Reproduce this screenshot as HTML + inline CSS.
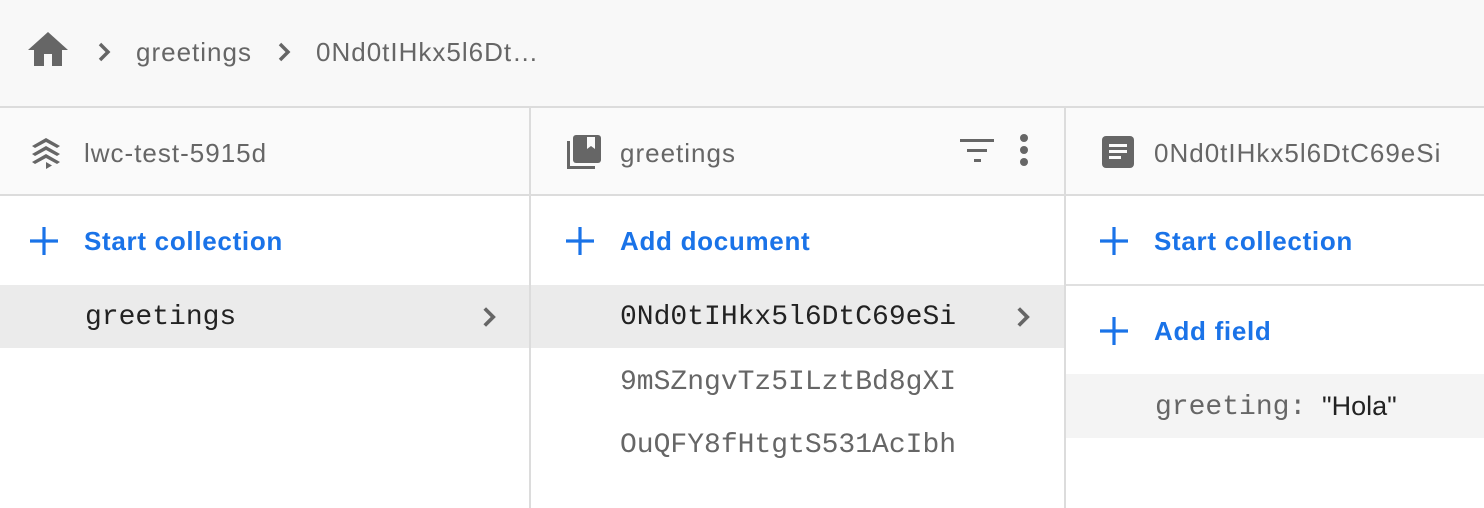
<!DOCTYPE html>
<html><head><style>
body{margin:0;width:1484px;height:508px;overflow:hidden;background:#fff;font-family:"Liberation Sans",sans-serif;position:relative}
.a{position:absolute;white-space:nowrap}
.top{left:0;top:0;width:1484px;height:106px;background:#f8f8f8;border-bottom:2px solid #dcdcdc}
.hdr{top:108px;height:86px;background:#fafafa;border-bottom:2px solid #dcdcdc}
.vl{top:108px;width:2px;height:400px;background:#dcdcdc}
.g{color:#666;font-size:26px;letter-spacing:1px}
.blue{color:#1a73e8;font-size:26px;font-weight:bold;letter-spacing:0.7px}
.mono{font-family:"Liberation Mono",monospace;font-size:28px}
</style></head><body>
<div class="a top"></div>
<svg class="a" style="left:28px;top:32px" width="40" height="36" viewBox="2 3 20 18"><path d="M10 20v-6h4v6h5v-8h3L12 3 2 12h3v8z" fill="#666"/></svg>
<svg class="a" style="left:88px;top:36px" width="32" height="32" viewBox="0 0 24 24"><path d="M9 6l6 6-6 6" stroke="#666" stroke-width="2.6" fill="none"/></svg>
<div class="a g" style="left:136px;top:37px">greetings</div>
<svg class="a" style="left:268px;top:36px" width="32" height="32" viewBox="0 0 24 24"><path d="M9 6l6 6-6 6" stroke="#666" stroke-width="2.6" fill="none"/></svg>
<div class="a g" style="left:316px;top:37px">0Nd0tIHkx5l6Dt…</div>

<div class="a hdr" style="left:0;width:1484px"></div>
<div class="a vl" style="left:529px"></div>
<div class="a vl" style="left:1064px"></div>

<svg class="a" style="left:28px;top:136px" width="36" height="34" viewBox="0 0 36 34"><path d="M4 10L18 2l14 8-3 2-11-6-11 6z M4 18L18 10l14 8-3 2-11-6-11 6z M4 26l14-8 14 8-3 2-11-6-11 6z M18 26l6 3.5-6 3.5z" fill="#666"/></svg>
<div class="a g" style="left:84px;top:138px">lwc-test-5915d</div>

<svg class="a" style="left:566px;top:134px" width="36" height="36" viewBox="0 0 36 36"><path d="M1 7v28h28v-3H4V7z" fill="#666"/><rect x="7" y="1" width="28" height="28" rx="3" fill="#666"/><path d="M21 3h8v12l-4-3-4 3z" fill="#fafafa"/></svg>
<div class="a g" style="left:620px;top:138px">greetings</div>
<svg class="a" style="left:958px;top:136px" width="40" height="30" viewBox="0 0 40 30"><rect x="2" y="3" width="34" height="3" fill="#666"/><rect x="9" y="13" width="20" height="3" fill="#666"/><rect x="16" y="23" width="7" height="3" fill="#666"/></svg>
<svg class="a" style="left:1014px;top:132px" width="20" height="36" viewBox="0 0 20 36"><circle cx="10" cy="6" r="4" fill="#666"/><circle cx="10" cy="18" r="4" fill="#666"/><circle cx="10" cy="30" r="4" fill="#666"/></svg>

<svg class="a" style="left:1102px;top:136px" width="32" height="32" viewBox="0 0 32 32"><rect x="0" y="0" width="32" height="32" rx="4" fill="#666"/><rect x="7" y="8" width="18" height="3" fill="#fafafa"/><rect x="7" y="14" width="18" height="3" fill="#fafafa"/><rect x="7" y="20" width="12" height="3" fill="#fafafa"/></svg>
<div class="a g" style="left:1154px;top:138px">0Nd0tIHkx5l6DtC69eSi</div>

<svg class="a" style="left:30px;top:227px" width="28" height="28" viewBox="0 0 28 28"><path d="M14 0v28M0 14h28" stroke="#1a73e8" stroke-width="3.2"/></svg>
<div class="a blue" style="left:84px;top:226px">Start collection</div>
<div class="a" style="left:0;top:285px;width:529px;height:63px;background:#ebebeb"></div>
<div class="a mono" style="left:85px;top:302px;color:#222">greetings</div>
<svg class="a" style="left:472px;top:300px" width="34" height="34" viewBox="0 0 24 24"><path d="M9 6l6 6-6 6" stroke="#666" stroke-width="2.6" fill="none"/></svg>

<svg class="a" style="left:566px;top:227px" width="28" height="28" viewBox="0 0 28 28"><path d="M14 0v28M0 14h28" stroke="#1a73e8" stroke-width="3.2"/></svg>
<div class="a blue" style="left:620px;top:226px">Add document</div>
<div class="a" style="left:531px;top:285px;width:533px;height:63px;background:#ebebeb"></div>
<div class="a mono" style="left:620px;top:302px;color:#222">0Nd0tIHkx5l6DtC69eSi</div>
<svg class="a" style="left:1006px;top:300px" width="34" height="34" viewBox="0 0 24 24"><path d="M9 6l6 6-6 6" stroke="#666" stroke-width="2.6" fill="none"/></svg>
<div class="a mono" style="left:620px;top:367px;color:#666">9mSZngvTz5ILztBd8gXI</div>
<div class="a mono" style="left:620px;top:430px;color:#666">OuQFY8fHtgtS531AcIbh</div>

<svg class="a" style="left:1100px;top:227px" width="28" height="28" viewBox="0 0 28 28"><path d="M14 0v28M0 14h28" stroke="#1a73e8" stroke-width="3.2"/></svg>
<div class="a blue" style="left:1154px;top:226px">Start collection</div>
<div class="a" style="left:1066px;top:284px;width:418px;height:2px;background:#e0e0e0"></div>
<svg class="a" style="left:1100px;top:317px" width="28" height="28" viewBox="0 0 28 28"><path d="M14 0v28M0 14h28" stroke="#1a73e8" stroke-width="3.2"/></svg>
<div class="a blue" style="left:1154px;top:316px">Add field</div>
<div class="a" style="left:1066px;top:374px;width:418px;height:64px;background:#f4f4f4"></div>
<div class="a mono" style="left:1155px;top:392px;color:#666">greeting:</div>
<div class="a" style="left:1322px;top:391px;font-size:27px;color:#222">"Hola"</div>
</body></html>
